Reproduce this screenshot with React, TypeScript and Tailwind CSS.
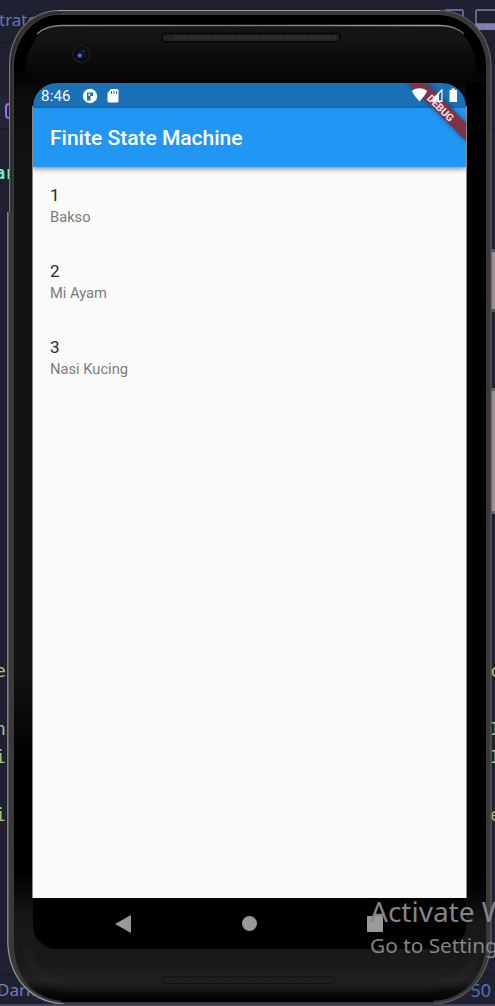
import React from "react";

const items = [
  { id: 1, name: "Bakso" },
  { id: 2, name: "Mi Ayam" },
  { id: 3, name: "Nasi Kucing" },
];

function EditorBackdrop() {
  return (
    <div className="col-start-1 row-start-1 flex flex-col overflow-hidden border-b-2 border-[#41445a] bg-[#1f2133] font-['Noto_Sans',sans-serif]">
      <div className="flex h-[43px] shrink-0 justify-between border-b border-[#171927]">
        <span className="-ml-px pt-2 text-[17px] leading-6 text-[#6576aa]">trate</span>
        <svg width="55" height="35" fill="none" stroke="#7c83b3" strokeWidth="1.4">
          <rect x="5" y="10" width="18" height="19" rx="1" />
          <rect x="36" y="10" width="22" height="19" rx="1" />
          <path d="M36 24h20v5H36z" fill="#7c83b3" />
        </svg>
      </div>
      <div className="h-[53px] shrink-0" />
      <div className="h-[34px] shrink-0 border-b-2 border-[#191b29] bg-[#222439] pt-[7px] pl-[5px]">
        <div className="h-4 w-3 rounded border-2 border-[#a66bd0]" />
      </div>
      <div className="flex flex-1 justify-between border-b border-[#151724] font-['DejaVu_Sans_Mono',monospace] text-[18px] leading-6 text-[#a9c47c]">
        <div className="-ml-[5px] flex flex-col pt-[31px]">
          <span className="text-[17px] font-bold text-[#70efc4]">ar</span>
          <span className="mt-[474px]">e</span>
          <span className="mt-[34px]">n</span>
          <span className="mt-1">i</span>
          <span className="mt-[34px]">i</span>
        </div>
        <div className="flex w-[5px] flex-col pt-[119px]">
          <div className="h-[63px] border-y-[3px] border-[#5b5859] bg-[#9b9192]" />
          <div className="mt-[76px] h-[126px] border-y-[3px] border-[#666163] bg-[#9b9192]" />
          <span className="mt-[145px]">c</span>
          <span className="mt-[34px]">I</span>
          <span className="mt-1">I</span>
          <span className="mt-[34px]">e</span>
        </div>
      </div>
      <div className="h-[29px] shrink-0 border-b border-[#151724]" />
      <div className="flex h-[29px] shrink-0 justify-between pt-[3px] pr-[4px] leading-6">
        <span className="-ml-[3px] text-[17px] text-[#747eb0]">Dark</span>
        <span className="text-[18px] text-[#566fb6]">50</span>
      </div>
    </div>
  );
}

function PhoneShell() {
  return (
    <svg className="relative col-start-1 row-start-1" width="495" height="1006" fill="none">
      <defs>
        <linearGradient id="face" x1="0" y1="14" x2="0" y2="1002" gradientUnits="userSpaceOnUse">
          <stop offset="0" stopColor="#171717" />
          <stop offset="0.025" stopColor="#141414" />
          <stop offset="0.065" stopColor="#040404" />
          <stop offset="0.08" stopColor="#0c0c0c" />
          <stop offset="0.18" stopColor="#131313" />
          <stop offset="0.66" stopColor="#131313" />
          <stop offset="0.76" stopColor="#000" />
          <stop offset="0.87" stopColor="#010101" />
          <stop offset="0.915" stopColor="#171717" />
          <stop offset="0.96" stopColor="#191919" />
          <stop offset="0.978" stopColor="#212121" />
          <stop offset="0.99" stopColor="#0a0a0a" />
          <stop offset="1" stopColor="#050505" />
        </linearGradient>
        <linearGradient id="shine" x1="36" x2="466" y1="0" y2="0" gradientUnits="userSpaceOnUse">
          <stop offset="0" stopColor="#777" />
          <stop offset="0.08" stopColor="#8b8b8b" />
          <stop offset="0.5" stopColor="#777" />
          <stop offset="0.93" stopColor="#a2a2a2" />
          <stop offset="1" stopColor="#555" />
        </linearGradient>
        <linearGradient id="rightEdge" x1="0" y1="78" x2="0" y2="925" gradientUnits="userSpaceOnUse">
          <stop offset="0" stopColor="#000" />
          <stop offset="0.92" stopColor="#000" />
          <stop offset="1" stopColor="#000" stopOpacity="0" />
        </linearGradient>
        <pattern id="mesh" width="5" height="4" patternUnits="userSpaceOnUse">
          <rect width="5" height="4" fill="#1a1917" />
          <path d="M0 4L2.5 0 5 4" stroke="#292620" />
        </pattern>
        <filter id="soft"><feGaussianBlur stdDeviation="3" /></filter>
      </defs>
      <path d="M58 10H440C470 11 491 36 491.5 64V944C489 980 464 1004 433 1005H64C31 1003 9 980 7.5 944V212H9V62C10 32 32 11 58 10Z" fill="#393939" />
      <path d="M58 10.5H440C470 11 490 36 491 64V944C488 980 464 1003 433 1004" stroke="#656565" />
      <path d="M58 10.5H440" stroke="#9b9b9b" />
      <path d="M9.5 212V64C10 33 31 11 58 10.5" stroke="#777" />
      <path d="M7.8 212V944C10 980 32 1002 64 1004" stroke="#989898" strokeWidth="1.2" />
      <path d="M11.5 212V66C12 34 34 13 62 12.5" stroke="#252525" />
      <path d="M58 15H438C467 16 486 39 486 66V942C485 978 463 1001 430 1001H66C34 1001 14 978 14 942V67C15 37 34 16 58 15Z" fill="url(#face)" />
      <path d="M14 73V67C15 37 34 16 58 15H438C467 16 486 39 486 66V74H476C478 45 461 26 441 25H61C39 27 26 47 25 73Z" fill="#000" />
      <path d="M37 34C43 28 51 26 61 25.5H441C451 26 459 29 464 34" stroke="url(#shine)" strokeWidth="1.5" />
      <path d="M466 82H486V925H466Z" fill="url(#rightEdge)" />
      <path d="M27 946C28 968 43 982 69 987H432C461 983 476 968 477 946" stroke="#2b2b2b" strokeWidth="5" opacity=".6" filter="url(#soft)" />
      <path d="M61 1000.5H434" stroke="#000" strokeWidth="3" />
      <path d="M54 1004.5H440" stroke="#414141" />
      <rect x="162" y="33.5" width="178" height="8.5" rx="4" fill="#25221f" stroke="#090909" strokeWidth="2" />
      <path d="M175 37.5H337" stroke="#322e2a" strokeWidth="4" strokeDasharray="2 1" />
      <rect x="162" y="977" width="174" height="6.5" rx="3" fill="url(#mesh)" stroke="#121212" />
      <circle cx="81.5" cy="54" r="8.5" fill="#0b0c11" stroke="#19191b" strokeWidth="2" />
      <circle cx="81.5" cy="54" r="4.5" fill="#11152a" />
      <circle cx="79.7" cy="55.5" r="2.1" fill="#526bbd" />
      <circle cx="84" cy="51" r="1" fill="#243159" />
      <path d="M32.5 106V898M466.5 106V898" stroke="#888" />
    </svg>
  );
}

function StatusBar() {
  return (
    <div className="flex h-[25px] shrink-0 items-center bg-[#1b70b6] pl-[8px] text-white">
      <span className="w-[41px] pt-px text-[15px] leading-none font-normal tracking-[0.2px]">8:46</span>
      <svg width="16" height="16" viewBox="0 0 16 16">
        <circle cx="8" cy="8" r="7.2" fill="white" />
        <path d="M5 4.5H12V8H8.5V12.5H5Z" fill="#1b70b6" />
        <path d="M6.5 5.5H8V8H6.5ZM11 4.5H14V8.5H11Z" fill="white" />
      </svg>
      <svg className="ml-[9px]" width="12" height="14" viewBox="0 0 12 14">
        <path d="M4 0H10Q11.5 0 11.5 1.5V12Q11.5 13.5 10 13.5H2Q.5 13.5.5 12V4Z" fill="white" />
        <path d="M4.5 2V5M7 2V5M9.5 2V5" stroke="#1b70b6" strokeWidth="1" />
      </svg>
    </div>
  );
}

function DebugBanner() {
  return (
    <svg className="pointer-events-none absolute top-0 right-0 z-20" width="65" height="65" viewBox="0 0 65 65">
      <defs>
        <filter id="ribbonShadow"><feGaussianBlur stdDeviation="2.4" /></filter>
      </defs>
      <path d="M7 0H25L65 40V58Z" fill="#000" opacity=".45" filter="url(#ribbonShadow)" />
      <path d="M7 0H25L65 40V58Z" fill="#7e334b" />
      <path d="M11 7.5Q18.5 3 26 7.5Q26 10 18.5 18.5Q11 10 11 7.5Z" fill="white" />
      <path d="M28 19L41.5 5.5V19Z" fill="white" />
      <path d="M38 11L40.3 8.7V17.5H38Z" fill="#1b619c" />
      <path d="M48.5 7H50.5V5.5H54V7H56V19H48.5Z" fill="white" />
      <text x="39.5" y="28.7" transform="rotate(45 39.5 25)" textAnchor="middle" textLength="33" fill="#eadce0" fontSize="10.5" fontWeight="800" fontFamily="Roboto, sans-serif">DEBUG</text>
    </svg>
  );
}

function AppScreen() {
  return (
    <div className="relative col-start-1 row-start-1 mt-[83px] ml-[33px] flex h-[866px] w-[433px] flex-col overflow-hidden rounded-[24px] bg-black font-[Roboto,sans-serif]">
      <StatusBar />
      <header className="z-10 flex h-[59px] shrink-0 items-center bg-[#2196f3] px-[17px] pt-[3px] text-[21px] font-medium text-white shadow-[0_2px_5px_rgba(0,0,0,0.45)]">
        Finite State Machine
      </header>
      <main className="h-[731px] shrink-0 bg-[#fafafa]">
        {items.map((item) => (
          <section key={item.id} className="flex h-[76px] flex-col px-[17px] pt-[18px]">
            <h2 className="text-[17px] leading-[21px] text-[#2b2b2b]">{item.id}</h2>
            <p className="text-[14.7px] leading-[22px] text-[#7c7c7c]">{item.name}</p>
          </section>
        ))}
      </main>
      <nav className="flex h-[51px] items-center justify-between bg-black pr-[83px] pl-[82px]">
        <svg width="16" height="18"><path d="M0 9L16 0V18Z" fill="#999" /></svg>
        <span className="size-[15px] rounded-full bg-[#999]" />
        <span className="size-[16px] rounded-[1px] bg-[#999]" />
      </nav>
      <DebugBanner />
    </div>
  );
}

export default function App() {
  return (
    <div className="relative grid h-[1006px] w-[495px] grid-cols-[495px] grid-rows-[1006px] overflow-hidden">
      <EditorBackdrop />
      <PhoneShell />
      <AppScreen />
      <aside className="absolute top-[892px] left-[370px] z-30 font-['Noto_Sans',sans-serif] whitespace-nowrap text-[#858585]">
        <p className="text-[28px] leading-[38px]">Activate Windows</p>
        <p className="text-[20.8px] leading-[31px]">Go to Settings to activate Windows.</p>
      </aside>
    </div>
  );
}
